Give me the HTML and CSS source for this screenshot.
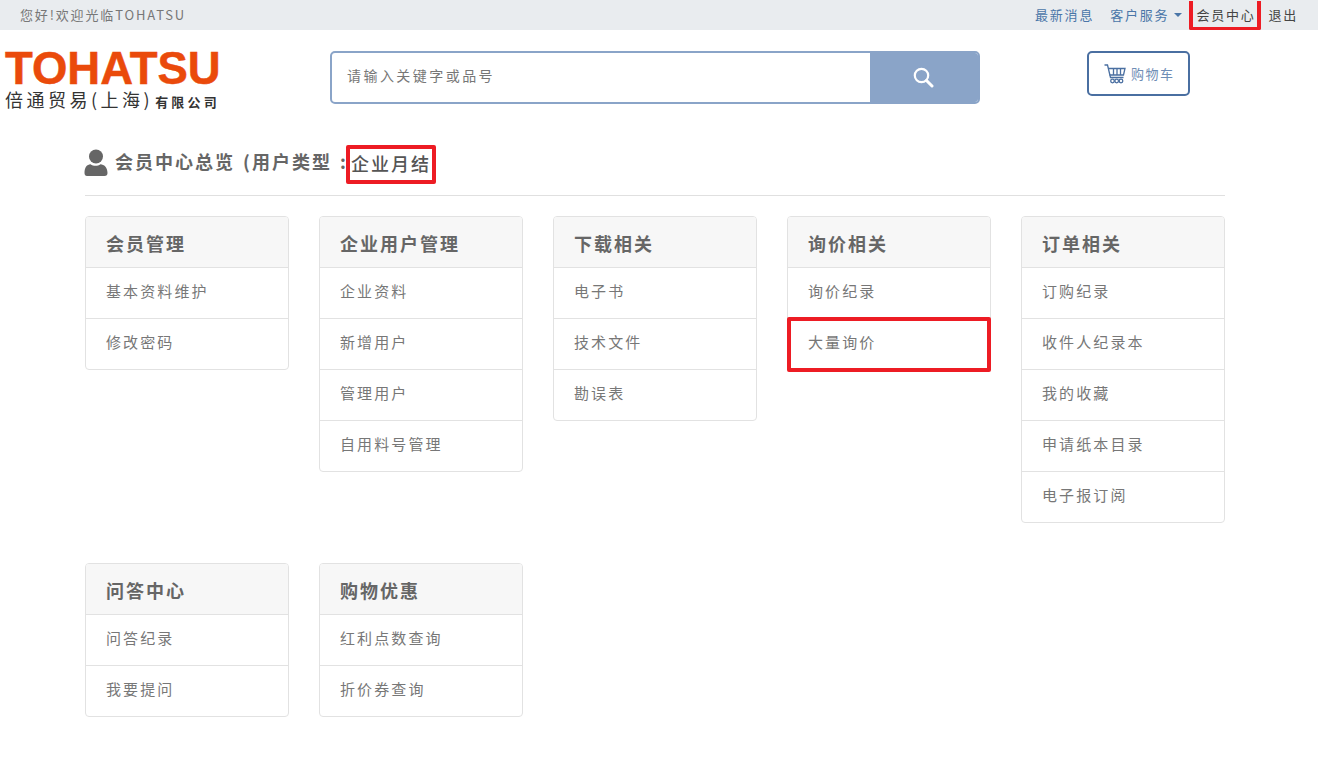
FILE: index.html
```html
<!DOCTYPE html>
<html lang="zh-CN">
<head>
<meta charset="utf-8">
<title>会员中心</title>
<link rel="stylesheet" href="styles.css">
</head>
<body>
<div class="topbar">
  <span class="welcome">您好!欢迎光临TOHATSU</span>
  <nav class="topnav">
    <a class="blue">最新消息</a>
    <a class="blue service">客户服务<i class="caret"></i></a>
    <a class="current">会员中心</a>
    <a class="logout">退出</a>
  </nav>
</div>
<header class="header">
  <div class="logo">
    <div class="logo-en">TOHATSU</div>
    <div class="logo-cn">倍通贸易(上海)<small>有限公司</small></div>
  </div>
  <form class="search">
    <div class="search-input">请输入关键字或品号</div>
    <div class="search-btn">
      <svg width="22" height="22" viewBox="0 0 22 22" fill="none" stroke="#fff"><circle cx="9.5" cy="9.5" r="6.7" stroke-width="2.2"/><path d="M14.5 14.5l5.5 5.5" stroke-width="3" stroke-linecap="round"/></svg>
    </div>
  </form>
  <a class="cart">
    <svg width="22" height="20" viewBox="0 0 22 20" fill="none" stroke="#4a6fa1" stroke-width="1.3"><path d="M0.5 1h3l3 12.5h13"/><path d="M4 4.5h17l-1.5 6.5H5.500"/><path d="M9.500 4.500v6.500M13 4.500v6.500M16.500 4.500v6.500"/><circle cx="8.500" cy="17" r="1.800"/><circle cx="17" cy="17" r="1.800"/><circle cx="12.700" cy="17" r="1.800"/></svg>
    <span>购物车</span>
  </a>
</header>
<main class="main">
  <h1 class="title">
    <svg width="24" height="27" viewBox="0 0 24 27" fill="#666"><circle cx="12" cy="7.500" r="7"/><path d="M0.500 24c0-6 2.500-8.500 6-8.800 3 2 7 2 10 0 3.500.3 7 2.800 7 8.800 0 2-1 3-3 3H3c-1.500 0-2.500-1-2.500-3z"/></svg>
    <span class="title-text">会员中心总览 (用户类型 :</span><span class="account-type">企业月结</span>
  </h1>
  <div class="grid">
    <section class="card"><h2>会员管理</h2><a>基本资料维护</a><a>修改密码</a></section>
    <section class="card"><h2>企业用户管理</h2><a>企业资料</a><a>新增用户</a><a>管理用户</a><a>自用料号管理</a></section>
    <section class="card"><h2>下载相关</h2><a>电子书</a><a>技术文件</a><a>勘误表</a></section>
    <section class="card"><h2>询价相关</h2><a>询价纪录</a><a class="marked">大量询价</a></section>
    <section class="card"><h2>订单相关</h2><a>订购纪录</a><a>收件人纪录本</a><a>我的收藏</a><a>申请纸本目录</a><a>电子报订阅</a></section>
    <section class="card"><h2>问答中心</h2><a>问答纪录</a><a>我要提问</a></section>
    <section class="card"><h2>购物优惠</h2><a>红利点数查询</a><a>折价券查询</a></section>
  </div>
</main>
</body>
</html>
```
FILE: styles.css
```css
* { box-sizing: border-box; }
html, body { margin: 0; padding: 0; }
body {
  background: #fff;
  color: #666;
  font-family: "Noto Sans CJK SC", "Noto Sans", sans-serif;
  overflow: hidden;
}
.topbar {
  height: 30px;
  background: #e9ecef;
  display: flex;
  justify-content: space-between;
  align-items: center;
  padding: 0 20px;
  font-size: 13px;
  letter-spacing: 1.8px;
  line-height: 28px;
}
.welcome { color: #777; letter-spacing: 1.85px; }
.topnav { display: flex; align-items: center; }
.topnav a { display: block; white-space: nowrap; }
.blue { color: #4a76a8; }
.service { margin-left: 16px; display: flex !important; align-items: center; }
.caret {
  width: 0;
  height: 0;
  margin-left: 5px;
  border-left: 4px solid transparent;
  border-right: 4px solid transparent;
  border-top: 4px solid #4a76a8;
}
.current {
  color: #444;
  margin-left: 7px;
  height: 29px;
  line-height: 27px;
  padding: 0 0 0 3px;
  border: 4px solid #ed1c24;
  border-top: 0;
  border-bottom-width: 3px;
  border-radius: 0 0 2px 2px;
  width: 72px;
  align-self: flex-start;
}
.logout { color: #444; margin-left: 7px; }
.header {
  display: flex;
  align-items: flex-start;
  height: 90px;
  padding: 21px 0 0 5px;
}
.logo { width: 325px; }
.logo-en {
  color: #ea4a0b;
  font-family: "Liberation Sans", Arial, sans-serif;
  font-weight: 700;
  font-size: 45.500px;
  line-height: 36px;
  height: 36px;
  -webkit-text-stroke: 0.5px #ea4a0b;
}
.logo-cn {
  color: #333;
  font-size: 18px;
  line-height: 24px;
  letter-spacing: 3.500px;
  white-space: nowrap;
}
.logo-cn small { font-size: 13px; font-weight: 700; letter-spacing: 3.200px; margin-left: 2px; }
.search {
  width: 650px;
  height: 53px;
  margin: 0;
  display: flex;
  border: 2px solid #8aa4c8;
  border-radius: 5px;
  overflow: hidden;
}
.search-input {
  flex: 1;
  padding-left: 15px;
  color: #777;
  font-size: 14px;
  letter-spacing: 2.450px;
  line-height: 45px;
}
.search-btn {
  width: 108px;
  background: #8aa4c8;
  display: flex;
  align-items: center;
  justify-content: center;
  padding: 0 2px 2px 0;
}
.cart {
  margin-left: 107px;
  width: 103px;
  height: 45px;
  border: 2px solid #4a6fa1;
  border-radius: 5px;
  display: flex;
  align-items: center;
  padding-left: 15px;
  gap: 5px;
  color: #6f8db5;
  font-size: 13px;
  letter-spacing: 1.500px;
}
.main { padding: 0 93px 0 85px; }
.title {
  margin: 19px 0 0;
  height: 57px;
  padding-top: 10px;
  display: flex;
  align-items: flex-start;
  border-bottom: 1px solid #e0e0e0;
  font-size: 18px;
  font-weight: 700;
  letter-spacing: 2px;
  word-spacing: 2px;
  line-height: 26px;
  color: #666;
}
.title svg { margin: 0 7px 0 -1px; flex: none; }
.title-text { margin-top: -1px; white-space: nowrap; width: 231px; }
.account-type {
  color: #555;
  font-weight: 500;
  margin-top: -4px;
  height: 39px;
  width: 90px;
  padding: 1px 0 0 1px;
  border: 4px solid #ed1c24;
  border-radius: 2px;
  white-space: nowrap;
  line-height: 26px;
}
.grid {
  display: grid;
  grid-template-columns: repeat(5, 204px);
  column-gap: 30px;
  row-gap: 40px;
  margin-top: 20px;
  align-items: start;
}
.card {
  border: 1px solid #e2e2e2;
  border-radius: 4px;
}
.card h2 {
  margin: 0;
  height: 50px;
  background: #f7f7f7;
  border-radius: 3px 3px 0 0;
  padding-left: 20px;
  font-size: 18px;
  font-weight: 700;
  letter-spacing: 2px;
  line-height: 53px;
  color: #666;
}
.card a {
  display: block;
  position: relative;
  height: 51px;
  border-top: 1px solid #e2e2e2;
  padding-left: 20px;
  font-size: 15px;
  letter-spacing: 2.100px;
  line-height: 46px;
  color: #777;
}
.card .marked::after {
  content: "";
  position: absolute;
  left: -1px;
  right: -1px;
  top: -2px;
  bottom: -3px;
  border: 4px solid #ed1c24;
  border-radius: 2px;
}
```
